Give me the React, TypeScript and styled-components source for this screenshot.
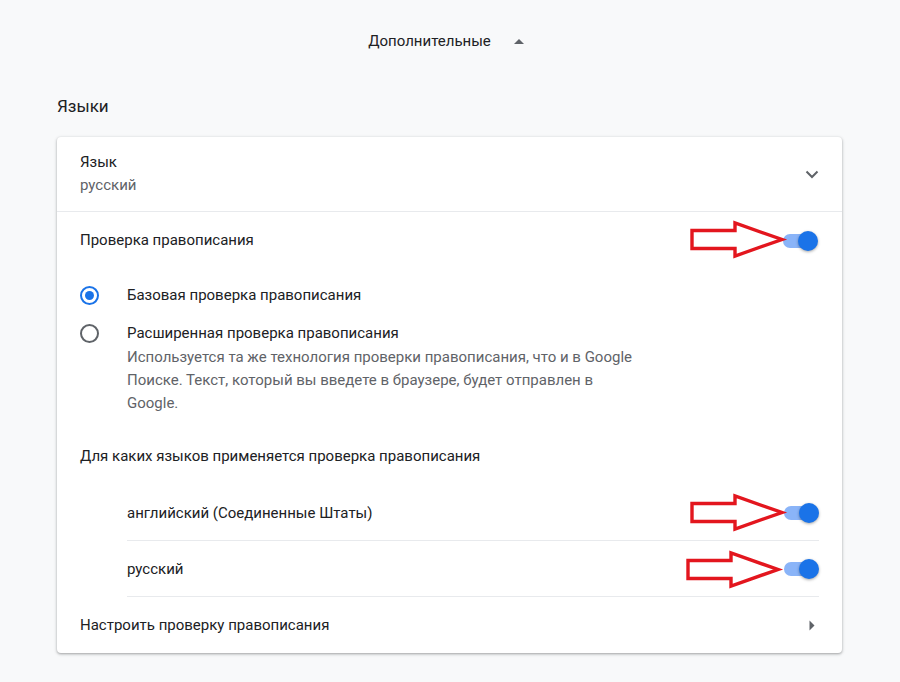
import React from "react";
import styled, { createGlobalStyle } from "styled-components";

const GlobalStyle = createGlobalStyle`
  html, body {
    margin: 0;
    padding: 0;
    background: #f8f9fa;
  }
  body {
    font-family: Roboto, "Liberation Sans", Arial, sans-serif;
    color: #202124;
    font-size: 15px;
  }
`;

const Page = styled("div")`
  width: 785px;
  padding: 0 58px 40px 57px;
`;

const AdvancedRow = styled("div")`
  height: 82px;
  display: flex;
  align-items: center;
  justify-content: center;
  gap: 22px;
  padding-right: 6px;
  font-size: 15px;
  color: #202124;
`;

const SectionTitle = styled("h2")`
  margin: 0;
  padding: 12px 0 19px 0;
  font-size: 17px;
  font-weight: 400;
  line-height: 24px;
  color: #202124;
`;

const Card = styled("div")`
  position: relative;
  background: #fff;
  border-radius: 4px;
  box-shadow: 0 1px 2px rgba(60, 64, 67, 0.3), 0 1px 3px 1px rgba(60, 64, 67, 0.15);
`;

const Row = styled("div")<{ $height?: number; $divider?: boolean }>`
  display: flex;
  align-items: center;
  justify-content: space-between;
  min-height: ${(p) => p.$height ?? 57}px;
  padding: 0 24px 0 23px;
  border-bottom: ${(p) => (p.$divider ? "1px solid #e8eaed" : "none")};
  line-height: 23px;
`;

const TextBlock = styled("div")`
  display: flex;
  flex-direction: column;
`;

const Secondary = styled("div")`
  color: #5f6368;
  line-height: 23px;
`;

const RadioGroup = styled("div")`
  display: flex;
  flex-direction: column;
  gap: 15px;
  padding: 15px 24px 13px 23px;
`;

const RadioRow = styled("div")`
  display: flex;
  align-items: flex-start;
  gap: 28px;
  line-height: 23px;
`;

const RadioCircle = styled("span")<{ $checked?: boolean }>`
  flex: none;
  box-sizing: border-box;
  width: 19px;
  height: 19px;
  margin-top: 2px;
  border-radius: 50%;
  border: 2px solid ${(p) => (p.$checked ? "#1a73e8" : "#5f6368")};
  display: flex;
  align-items: center;
  justify-content: center;

  &::after {
    content: "";
    display: ${(p) => (p.$checked ? "block" : "none")};
    width: 9px;
    height: 9px;
    border-radius: 50%;
    background: #1a73e8;
  }
`;

const RadioDescription = styled("div")`
  width: 520px;
  padding-top: 1px;
  color: #5f6368;
`;

const LangList = styled("div")`
  margin: 0 23px 0 70px;
`;

const LangRow = styled("div")`
  display: flex;
  align-items: center;
  justify-content: space-between;
  min-height: 55px;
  border-bottom: 1px solid #e8eaed;
`;

const Toggle = styled("span")`
  position: relative;
  display: inline-block;
  width: 35px;
  height: 20px;
  flex: none;

  &::before {
    content: "";
    position: absolute;
    left: 0;
    top: 3px;
    width: 34px;
    height: 14px;
    border-radius: 7px;
    background: #8ab4f8;
  }

  &::after {
    content: "";
    position: absolute;
    right: 0;
    top: 0;
    width: 20px;
    height: 20px;
    border-radius: 50%;
    background: #1a73e8;
    box-shadow: 0 1px 3px rgba(0, 0, 0, 0.35);
  }
`;

const IconBox = styled("span")`
  display: inline-flex;
  align-items: center;
  justify-content: center;
  width: 24px;
  height: 24px;
  margin-right: -6px;
  color: #5f6368;
`;

const Callout = styled("svg")<{ $left: number; $top: number }>`
  position: absolute;
  left: ${(p) => p.$left}px;
  top: ${(p) => p.$top}px;
  width: 95px;
  height: 36px;
  overflow: visible;
  pointer-events: none;
`;

const RedArrow = ({ left, top }: { left: number; top: number }) => (
  <Callout $left={left} $top={top} viewBox="0 0 95 36">
    <polygon
      points="2,8.5 45,8.5 45,1 92,17.5 45,34 45,26.5 2,26.5"
      fill="none"
      stroke="#e3161e"
      strokeWidth="3.4"
      strokeLinejoin="miter"
    />
  </Callout>
);

const App = () => (
  <>
    <GlobalStyle />
    <Page>
      <AdvancedRow>
        <span>Дополнительные</span>
        <svg width="12" height="7" viewBox="0 0 12 7">
          <path d="M1 6 L6 1 L11 6 Z" fill="#5f6368" />
        </svg>
      </AdvancedRow>

      <SectionTitle>Языки</SectionTitle>

      <Card>
        <Row $height={74} $divider>
          <TextBlock>
            <div>Язык</div>
            <Secondary>русский</Secondary>
          </TextBlock>
          <IconBox>
            <svg width="14" height="9" viewBox="0 0 14 9">
              <path d="M1.5 1.5 L7 7 L12.5 1.5" fill="none" stroke="#5f6368" strokeWidth="2" />
            </svg>
          </IconBox>
        </Row>

        <Row>
          <span>Проверка правописания</span>
          <Toggle />
        </Row>

        <RadioGroup>
          <RadioRow>
            <RadioCircle $checked />
            <span>Базовая проверка правописания</span>
          </RadioRow>
          <RadioRow>
            <RadioCircle />
            <TextBlock>
              <span>Расширенная проверка правописания</span>
              <RadioDescription>
                Используется та же технология проверки правописания, что и в Google
                Поиске. Текст, который вы введете в браузере, будет отправлен в
                Google.
              </RadioDescription>
            </TextBlock>
          </RadioRow>
        </RadioGroup>

        <Row>
          <span>Для каких языков применяется проверка правописания</span>
        </Row>

        <LangList>
          <LangRow>
            <span>английский (Соединенные Штаты)</span>
            <Toggle />
          </LangRow>
          <LangRow>
            <span>русский</span>
            <Toggle />
          </LangRow>
        </LangList>

        <Row $height={56}>
          <span>Настроить проверку правописания</span>
          <IconBox>
            <svg width="6" height="11" viewBox="0 0 6 11">
              <path d="M0.5 0.5 L5.5 5.5 L0.5 10.5 Z" fill="#5f6368" />
            </svg>
          </IconBox>
        </Row>

        <RedArrow left={633} top={85} />
        <RedArrow left={633} top={358} />
        <RedArrow left={629} top={415} />
      </Card>
    </Page>
  </>
);

export default App;
